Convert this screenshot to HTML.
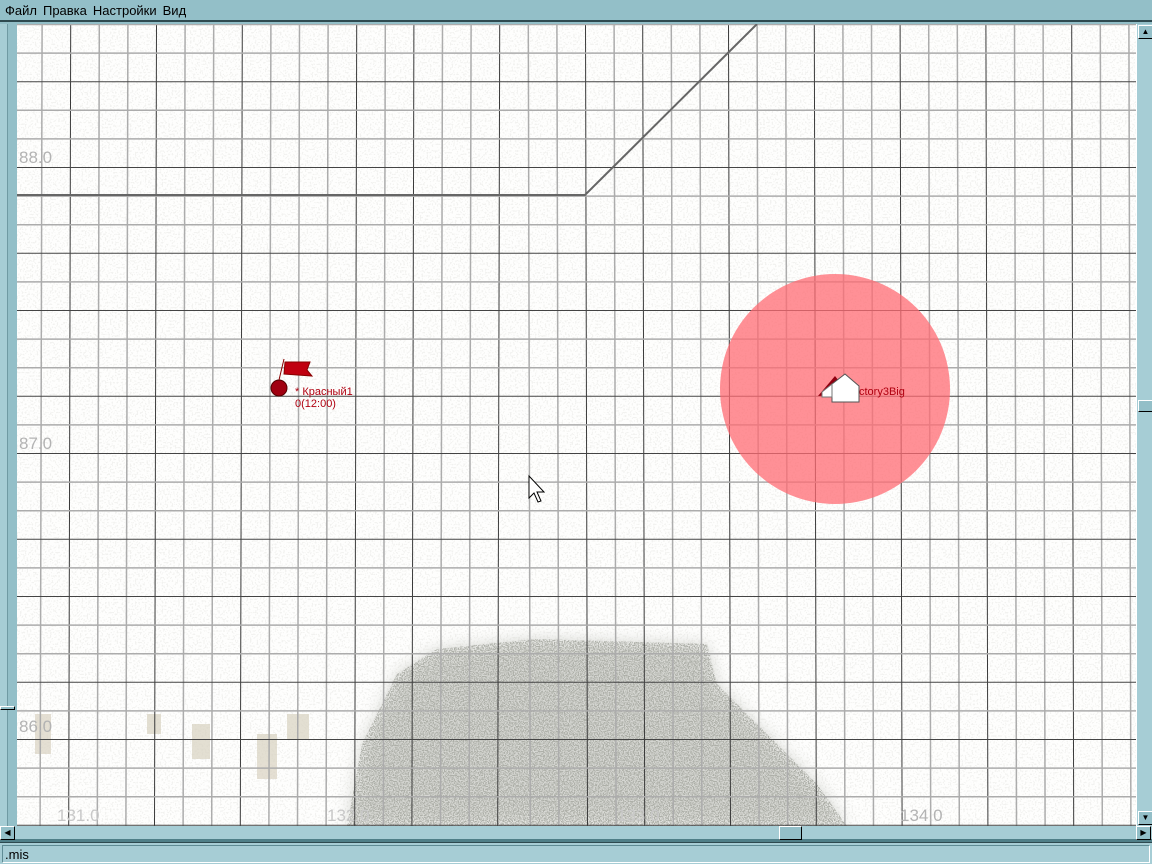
<!DOCTYPE html>
<html><head><meta charset="utf-8">
<style>
html,body{margin:0;padding:0;width:1152px;height:864px;overflow:hidden;background:#93bfc8;font-family:"Liberation Sans",sans-serif;}
#menu{position:absolute;left:0;top:0;width:1152px;height:22px;background:#93bfc8;border-bottom:2px solid #2e4a50;box-sizing:border-box;font-size:13px;line-height:21px;color:#000;}
#menu span{margin-left:5px;margin-right:1px}
#map{position:absolute;left:17px;top:24px;width:1119px;height:802px;background:#fefefd;overflow:hidden}
#lsb{position:absolute;left:0;top:24px;width:17px;height:802px;background:#a6cdd5}
#lsb:before{content:"";position:absolute;left:7px;top:0;width:10px;height:802px;background:#93bfc8;border-left:1px solid #6f9aa3}
#rsb{position:absolute;left:1136px;top:24px;width:16px;height:802px;background:#a6cdd5;border-left:1px solid #fff;box-sizing:border-box}
#hsb{position:absolute;left:0;top:826px;width:1152px;height:16px;background:#a6cdd5;border-bottom:3px solid #4f7f88;box-sizing:border-box}
#status{position:absolute;left:0;top:842px;width:1152px;height:22px;background:#a6cdd5;border-top:1px solid #2e4a50;box-sizing:border-box;}
#status div{position:absolute;left:2px;top:2px;right:2px;bottom:1px;border:1px solid #5f8c95;border-right-color:#fff;border-bottom-color:#fff;font-size:13px;line-height:17px;padding-left:2px}
.btn{position:absolute;width:15px;height:14px;background:#93bfc8;border:1px solid #fff;border-right-color:#000;border-bottom-color:#000;box-sizing:border-box}
.lbl{position:absolute;font-size:17px;color:#b3b3b3}
</style></head><body>
<div id="menu"><span>Файл</span><span>Правка</span><span>Настройки</span><span>Вид</span></div>
<div id="lsb"><div class="btn" style="left:0;top:682px;width:15px;height:4px;border-width:1px"></div></div>
<div id="map">
<svg id="sv" width="1119" height="802" xmlns="http://www.w3.org/2000/svg" style="position:absolute;left:0;top:0">
<defs>
<filter id="noise" x="0" y="0" width="100%" height="100%">
<feTurbulence type="fractalNoise" baseFrequency="0.8" numOctaves="2" seed="3"/>
<feColorMatrix type="matrix" values="0 0 0 0 0.42  0 0 0 0 0.43  0 0 0 0 0.39  0 0 0 -9 4.9"/>
</filter>
<filter id="speck" x="0" y="0" width="100%" height="100%">
<feTurbulence type="fractalNoise" baseFrequency="0.6" numOctaves="1" seed="7"/>
<feColorMatrix type="matrix" values="0 0 0 0 0.6  0 0 0 0 0.6  0 0 0 0 0.55  0 0 0 -14 6.3"/>
</filter>
<filter id="blur"><feGaussianBlur stdDeviation="8"/></filter>
<clipPath id="fc"><path d="M330,802 L345,720 L380,650 L420,625 L520,615 L690,620 L700,660 L740,700 L800,760 L830,802 Z"/></clipPath>
</defs>
<rect width="1119" height="802" filter="url(#speck)" opacity="0.22"/>
<g filter="url(#blur)" opacity="0.5"><path d="M330,802 L345,720 L380,650 L420,625 L520,615 L690,620 L700,660 L740,700 L800,760 L830,802 Z" fill="#b0b2aa"/></g>
<rect width="1119" height="802" filter="url(#noise)" clip-path="url(#fc)"/>
<g fill="#d8d2c0" opacity="0.7"><rect x="18" y="690" width="16" height="40"/><rect x="130" y="690" width="14" height="20"/><rect x="175" y="700" width="18" height="35"/><rect x="240" y="710" width="20" height="45"/><rect x="270" y="690" width="22" height="25"/></g>
<g id="grid"></g>
<path d="M0,171 L568,171 L740,0" stroke="#666" stroke-width="2" fill="none"/>
<circle cx="818" cy="365" r="115" fill="#ff6b73" opacity="0.75"/>
<circle cx="262" cy="364" r="8" fill="#a00010" stroke="#500" stroke-width="1"/>
<path d="M262,356 L267,335 M268,338 L293,338 L290,346 L295,352 L267,350 Z" fill="#c00010" stroke="#800" stroke-width="1"/>
<path d="M801,372 L818,352 L832,370 Z" fill="#900010"/>
<path d="M815,360 L828,350 L842,362 L842,378 L815,378 Z" fill="#fff" stroke="#555"/>
<path d="M805,368 L815,360 L815,373 L805,373 Z" fill="#fff" stroke="#777"/>
<path d="M512,452 L512,474 L517,469 L521,478 L524,477 L520,468 L527,468 Z" fill="#fff" stroke="#000" stroke-width="1"/>
</svg>
<div style="position:absolute;left:278px;top:362px;font-size:11px;line-height:12px;color:#b00010">* Красный1<br>0(12:00)</div>
<div style="position:absolute;left:842px;top:362px;font-size:11px;color:#b00010">ctory3Big</div>
<div class="lbl" style="left:2px;top:124px">88.0</div>
<div class="lbl" style="left:2px;top:410px">87.0</div>
<div class="lbl" style="left:2px;top:693px">86.0</div>
<div class="lbl" style="left:40px;top:782px;color:#c8c8c8">131.0</div>
<div class="lbl" style="left:310px;top:782px;color:#c8c8c8">132.0</div>
<div class="lbl" style="left:600px;top:782px;color:#c8c8c8">133.0</div>
<div class="lbl" style="left:883px;top:782px">134.0</div>
</div>
<div id="rsb">
<div class="btn" style="left:1px;top:1px;font-size:8px;text-align:center;line-height:12px">▲</div>
<div class="btn" style="left:1px;top:376px;height:12px"></div>
<div class="btn" style="left:1px;top:787px;font-size:8px;text-align:center;line-height:12px">▼</div>
</div>
<div id="hsb">
<div class="btn" style="left:0;top:0;font-size:8px;text-align:center;line-height:12px">◀</div>
<div class="btn" style="left:779px;top:0;width:23px;height:14px"></div>
<div class="btn" style="left:1136px;top:0;font-size:8px;text-align:center;line-height:12px">▶</div>
</div>
<div id="status"><div>.mis</div></div>
<script>
(function(){
var g=document.getElementById('grid'),s='';
var vd=[0,1,0,0,1,0,0,1,0,0,0,1,0,1,0,0,1,0,0,1,0,1,0,0,1,0,0,1,0,0,1,0,0,1,0,0,1,0,0,1];
var hd=[0,0,1,0,0,1,0,0,1,0,1,0,0,1,0,1,0,0,1,0,1,0,0,1,0,1,0,0,1,0];
var k=0;
for(var x=25.1;x<1119;x+=28.6,k++){
 var d=vd[k%vd.length];
 s+='<line x1="'+x.toFixed(1)+'" y1="0" x2="'+(x+(x<500?-1:1)*2).toFixed(1)+'" y2="802" stroke="'+(d?'#3a3a3a':'#acacac')+'" stroke-width="'+(d?1:1.5)+'"/>';
}
k=0;
for(var y=0.5;y<802;y+=28.6,k++){
 var d=hd[k%hd.length];
 s+='<line x1="0" y1="'+y.toFixed(1)+'" x2="1119" y2="'+y.toFixed(1)+'" stroke="'+(d?'#444':'#acacac')+'" stroke-width="'+(d?1:1.5)+'"/>';
}
g.innerHTML=s;
})();
</script>
</body></html>
